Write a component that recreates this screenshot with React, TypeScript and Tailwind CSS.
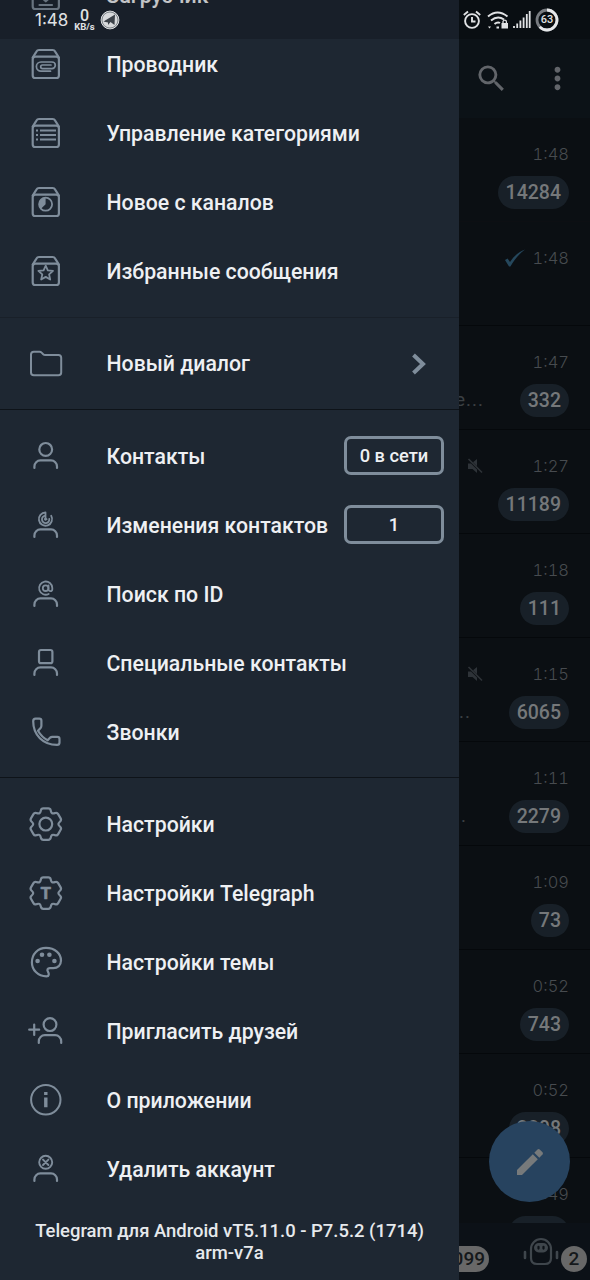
import type { ReactNode } from 'react'
import clsx from 'clsx'
import { MdSearch, MdMoreVert } from 'react-icons/md'

type MenuItem = {
  label: string;
  icon: ReactNode;
  badge?: string;
  arrow?: boolean;
};

type Chat = {
  time: string;
  count?: string;
  text?: string;
  textClass?: string;
  muted?: boolean;
  read?: boolean;
};

// six-tooth gear outline around 0,0 with softened corners
function gearPath() {
  const tooth = [[-5.4, -11.4], [-4.5, -15.7], [4.5, -15.7], [5.4, -11.4]]
  const pts: number[][] = []
  for (let i = 0; i < 6; i++) {
    const a = (i * Math.PI) / 3
    tooth.forEach(([x, y]) => {
      pts.push([x * Math.cos(a) - y * Math.sin(a), x * Math.sin(a) + y * Math.cos(a)])
    })
  }
  let d = ''
  pts.forEach((p, i) => {
    const prev = pts[(i + pts.length - 1) % pts.length]
    const next = pts[(i + 1) % pts.length]
    const near = (q: number[]) => {
      const len = Math.hypot(q[0] - p[0], q[1] - p[1])
      const t = Math.min(2, len / 2) / len
      return `${(p[0] + (q[0] - p[0]) * t).toFixed(2)} ${(p[1] + (q[1] - p[1]) * t).toFixed(2)}`
    }
    d += `${i === 0 ? 'M' : 'L'}${near(prev)}Q${p[0].toFixed(2)} ${p[1].toFixed(2)} ${near(next)}`
  })
  return d + 'Z'
}

const GEAR = gearPath()

function Icon({ children }: { children: ReactNode }) {
  return (
    <svg
      width="36"
      height="35"
      viewBox="0 0 36 35"
      fill="none"
      stroke="currentColor"
      strokeWidth="2.2"
      strokeLinecap="round"
      strokeLinejoin="round"
      className="shrink-0"
    >
      {children}
    </svg>
  )
}

function BoxIcon({ children }: { children: ReactNode }) {
  return (
    <Icon>
      <path d="M4.7 9.5 8.3 3.8Q9.3 2 11 2H24.6Q26.3 2 27.3 3.8L30.9 9.5" />
      <rect x="4.7" y="8.6" width="26.2" height="21.4" rx="2.6" />
      {children}
    </Icon>
  )
}

function PersonIcon({ children }: { children: ReactNode }) {
  return (
    <Icon>
      {children}
      <path d="M6.4 29V27.4A6 6 0 0 1 12.4 21.4H23A6 6 0 0 1 29 27.4V29" />
    </Icon>
  )
}

const mainItems: MenuItem[] = [
  {
    label: 'Загрузчик',
    icon: <BoxIcon><path d="M17.8 13V22M13.8 18.5 17.8 22.3 21.8 18.5M11.5 26H24" /></BoxIcon>,
  },
  {
    label: 'Проводник',
    icon: (
      <BoxIcon>
        <path strokeWidth="1.7" d="M22.5 23.2H13A4.6 4.6 0 0 1 13 14H24A3.3 3.3 0 0 1 24 20.6H14.5A1.8 1.8 0 0 1 14.5 17H23" />
      </BoxIcon>
    ),
  },
  {
    label: 'Управление категориями',
    icon: (
      <BoxIcon>
        <path strokeLinecap="butt" d="M8 13.5H10M12 13.5H28M8 18H10M12 18H28M8 22.5H10M12 22.5H28" />
      </BoxIcon>
    ),
  },
  {
    label: 'Новое с каналов',
    icon: (
      <BoxIcon>
        <circle cx="17.6" cy="18.2" r="6.5" strokeWidth="1.8" />
        <path d="M17.6 18.2V11.7A6.5 6.5 0 0 0 13 22.8Z" fill="currentColor" stroke="none" />
      </BoxIcon>
    ),
  },
  {
    label: 'Избранные сообщения',
    icon: (
      <BoxIcon>
        <path strokeWidth="1.8" d="M17.7 10.6 19.8 15.4 25 15.9 21.1 19.4 22.2 24.5 17.7 21.9 13.2 24.5 14.3 19.4 10.4 15.9 15.6 15.4Z" />
      </BoxIcon>
    ),
  },
]

const dialogItems: MenuItem[] = [
  {
    label: 'Новый диалог',
    arrow: true,
    icon: (
      <Icon>
        <path strokeWidth="2" d="M3 7.6Q3 4.8 5.8 4.8H11.6Q12.8 4.8 13.6 5.6L15.2 7.2Q16 8 17.2 8H30.4Q33.2 8 33.2 10.8V25.4Q33.2 28.2 30.4 28.2H5.8Q3 28.2 3 25.4Z" />
      </Icon>
    ),
  },
]

const contactItems: MenuItem[] = [
  {
    label: 'Контакты',
    badge: '0 в сети',
    icon: <PersonIcon><circle cx="17.7" cy="10.4" r="6.4" /></PersonIcon>,
  },
  {
    label: 'Изменения контактов',
    badge: '1',
    icon: (
      <PersonIcon>
        <path strokeWidth="1.8" d="M17.5 4.5A6.6 6.6 0 1 0 23.2 7.8M17.5 7.7A3.7 3.7 0 1 0 21.3 10.8M17.5 4.5V11.2" />
        <circle cx="17.6" cy="11.2" r="1.2" strokeWidth="1" />
      </PersonIcon>
    ),
  },
  {
    label: 'Поиск по ID',
    icon: (
      <PersonIcon>
        <path strokeWidth="1.8" d="M20.7 17A6.6 6.6 0 1 1 24.3 11V12.2A1.9 1.9 0 0 1 20.5 12.2V8.4" />
        <circle cx="17.6" cy="11.2" r="2.8" strokeWidth="1.8" />
      </PersonIcon>
    ),
  },
  {
    label: 'Специальные контакты',
    icon: <PersonIcon><rect x="11" y="4" width="13.4" height="13.2" rx="2" /></PersonIcon>,
  },
  {
    label: 'Звонки',
    icon: (
      <Icon>
        <path d="M7.5 3.6H11.3Q13.4 3.6 13.4 5.7V10.8Q13.4 12 12.6 12.9L10 15.7Q13.6 22 19.7 25.3L22.2 22.6Q23 21.8 24.2 21.8H29.4Q31.5 21.8 31.5 23.9V27.4Q31.5 29.8 29 29.8C15 29.8 5.2 20 5.2 6.2Q5.2 3.6 7.5 3.6Z" />
      </Icon>
    ),
  },
]

const settingsItems: MenuItem[] = [
  {
    label: 'Настройки',
    icon: (
      <Icon>
        <g transform="translate(17.8 17.1)">
          <path d={GEAR} />
          <circle r="6.4" />
        </g>
      </Icon>
    ),
  },
  {
    label: 'Настройки Telegraph',
    icon: (
      <Icon>
        <g transform="translate(17.8 17.1)">
          <path d={GEAR} />
          <text
            y="6.2"
            textAnchor="middle"
            fill="currentColor"
            stroke="currentColor"
            strokeWidth="0.6"
            className="font-['Roboto',sans-serif] text-[17px] font-bold"
          >
            T
          </text>
        </g>
      </Icon>
    ),
  },
  {
    label: 'Настройки темы',
    icon: (
      <Icon>
        <path d="M18 2.9C27 2.9 33 8.5 33 15.6 33 20.4 29.6 23.1 25.3 23.1H21.8C19.4 23.1 18.9 25 19.9 26.6 21.2 28.6 21.3 31.3 18.5 31.3 9.6 31.3 3.9 24.6 3.9 17.4 3.9 9 10 2.9 18 2.9Z" />
        <g fill="currentColor" stroke="none">
          <circle cx="9.6" cy="16" r="2.3" />
          <circle cx="14" cy="9.7" r="2.3" />
          <circle cx="21.4" cy="9.7" r="2.3" />
          <circle cx="26.4" cy="16" r="2.3" />
        </g>
      </Icon>
    ),
  },
  {
    label: 'Пригласить друзей',
    icon: (
      <Icon>
        <circle cx="22" cy="10.6" r="6.4" />
        <path d="M10.8 29V27.2A6 6 0 0 1 16.8 21.2H27.2A6 6 0 0 1 33.2 27.2V29M1.2 15.7H11.2M6.2 10.5V20.9" />
      </Icon>
    ),
  },
  {
    label: 'О приложении',
    icon: (
      <Icon>
        <circle cx="17.8" cy="16.8" r="14.7" strokeWidth="2" />
        <path strokeWidth="3.4" strokeLinecap="butt" d="M17.8 9V12M17.8 14.4V24.2" />
      </Icon>
    ),
  },
  {
    label: 'Удалить аккаунт',
    icon: (
      <PersonIcon>
        <circle cx="17.7" cy="10.3" r="6.5" strokeWidth="1.9" />
        <path strokeWidth="1.9" d="M15 7.6 20.4 13M20.4 7.6 15 13" />
      </PersonIcon>
    ),
  },
]

const chats: Chat[] = [
  { time: '1:48', count: '14284' },
  { time: '1:48', read: true },
  { time: '1:47', count: '332', text: 'е...', textClass: '-ml-1' },
  { time: '1:27', count: '11189', muted: true },
  { time: '1:18', count: '111' },
  { time: '1:15', count: '6065', muted: true, text: '..' },
  { time: '1:11', count: '2279', text: '.', textClass: 'ml-0.5' },
  { time: '1:09', count: '73' },
  { time: '0:52', count: '743' },
  { time: '0:52', count: '2808' },
  { time: '0:49', count: '1208' },
]

function Section({ items, className = 'pt-px' }: { items: MenuItem[]; className?: string }) {
  return (
    <ul>
      {items.map((item) => (
        <li key={item.label} className="flex h-[69px] items-center pr-[15px] pl-7 text-[#7f8d9b]">
          {item.icon}
          <span className={clsx('ml-[42.5px] flex-1 whitespace-nowrap text-[21.25px] font-medium text-[#eef0f3]', className)}>
            {item.label}
          </span>
          {item.badge && (
            <span className="mb-0.5 flex h-[39px] w-[100px] items-center justify-center rounded-[7px] border-3 border-[#7f8d9b] pt-px text-[18.3px] font-medium text-[#eef0f3]">
              {item.badge}
            </span>
          )}
          {item.arrow && (
            <svg width="16" height="22" viewBox="0 0 16 22" className="mr-[17px] mb-0.5" fill="none" stroke="currentColor" strokeWidth="4">
              <path d="M2.5 2 12 11 2.5 20" />
            </svg>
          )}
        </li>
      ))}
    </ul>
  )
}

function Drawer() {
  return (
    <aside className="flex h-full w-[459px] shrink-0 flex-col bg-[#1e2732]">
      <div className="-mt-[38px]">
        <Section items={mainItems} className="pb-px" />
      </div>
      <hr className="mt-2.5 mb-3 border-[#192029]" />
      <Section items={dialogItems} className="pb-px" />
      <hr className="mt-2.5 mb-3 border-[#0e1319]" />
      <Section items={contactItems} />
      <hr className="mt-2.5 mb-3 border-[#0e1319]" />
      <Section items={settingsItems} />
      <p className="mt-4 text-center text-[18.45px] leading-[22px] font-medium text-[#e6e9ec]">
        Telegram для Android vT5.11.0 - P7.5.2 (1714)
        <br />
        arm-v7a
      </p>
    </aside>
  )
}

function ChatRow({ chat }: { chat: Chat }) {
  return (
    <div className="h-[104px] shrink-0 border-b border-[#05080b] pt-[25px] pr-[21px] first:border-[#0d0f13]">
      <div className="flex h-[22px] items-center justify-end">
        {chat.muted && (
          <svg width="16" height="16" viewBox="0 0 16 16" className="mr-auto ml-2" fill="#2e3338">
            <path d="M1 5.5H4L10 11.5V15L5.5 11H1ZM6 4.2 10 1V8.2Z" />
            <path d="M1.5 1 15 14.5" stroke="#2e3338" strokeWidth="1.6" />
          </svg>
        )}
        {chat.read && (
          <svg width="22" height="19" viewBox="0 0 22 19" className="mr-[7px]" fill="#25475c">
            <path d="M1 11 3.6 9.4 6 13C10 7 14.5 3 21 .5 15 5 10.5 10.5 6.4 17.6H5Z" />
          </svg>
        )}
        <span className="font-['Inter',sans-serif] text-[16.5px] font-light tabular-nums text-[#474b4f]">{chat.time}</span>
      </div>
      <div className="mt-[11px] flex h-[33px] items-center justify-end">
        {chat.text && (
          <span className={clsx('mr-auto text-[19px] tracking-[1px] text-[#3b4044]', chat.textClass)}>{chat.text}</span>
        )}
        {chat.count && (
          <span className="flex h-[33px] items-center rounded-full bg-[#182028] px-2 text-[19.5px] font-medium text-[#75787a]">
            {chat.count}
          </span>
        )}
      </div>
    </div>
  )
}

function BottomBar() {
  return (
    <nav className="flex h-[57px] shrink-0 items-center bg-[#0c1117] pt-[15px]">
      <span className="flex h-[26px] w-[30px] items-center justify-end rounded-r-full bg-[#686868] pr-1 text-[19px] font-medium text-[#15181b]">
        099
      </span>
      <svg width="36" height="30" viewBox="0 0 36 30" className="mb-4 ml-[34px]" fill="none" stroke="#3f464c" strokeWidth="2.2" strokeLinecap="round">
        <path d="M8 22V13A10 10 0 0 1 28 13V22Q28 28 22 28H14Q8 28 8 22Z" />
        <rect x="11" y="7" width="14" height="9.5" rx="4.7" fill="#3f464c" stroke="none" />
        <path d="M2 16V22M34 16V22" strokeWidth="2.6" />
        <path d="M15.5 10.8V12.6M20.5 10.8V12.6" stroke="#0c1117" />
      </svg>
      <span className="ml-0.5 flex h-[26px] w-[26px] items-center justify-center rounded-full bg-[#686868] text-[19px] font-medium text-[#15181b]">
        2
      </span>
    </nav>
  )
}

function ChatList() {
  return (
    <main className="relative flex h-full min-w-0 flex-1 flex-col overflow-hidden bg-[#0b0f13]">
      <header className="flex h-[118px] shrink-0 items-center bg-[#0c1217] pt-[39px] text-[#62656a]">
        <MdSearch className="ml-[14.5px] h-[35px] w-[35px]" />
        <MdMoreVert className="ml-[31.5px] h-[35px] w-[35px]" />
      </header>
      <div className="flex min-h-0 flex-1 flex-col overflow-hidden">
        {chats.map((chat, i) => (
          <ChatRow key={i} chat={chat} />
        ))}
      </div>
      <BottomBar />

      {/* compose button */}
      <button className="absolute right-5 bottom-[78px] flex h-[81px] w-[81px] items-center justify-center rounded-full bg-[#27435f]">
        <svg width="28" height="28" viewBox="0 0 28 28" fill="#777a7b">
          <path d="M1 27V22L16.8 6.2 21.8 11.2 6 27Z" />
          <path d="M18.300 4.700 21.500 1.500Q22.600.5 23.700 1.500L26.500 4.300Q27.500 5.400 26.500 6.500L23.300 9.700Z" />
        </svg>
      </button>
    </main>
  )
}

function StatusBar() {
  return (
    <div className="absolute inset-x-0 top-0 flex h-[39px] items-center bg-black/18 text-[#e0e2e4]">
      <span className="mt-0.5 ml-[35px] w-[39px] font-['Inter',sans-serif] text-[17px]">1:48</span>
      <div className="mt-0.5 flex w-[21px] flex-col items-center">
        <span className="text-[16px] leading-[13px] font-medium">0</span>
        <span className="text-[9.5px] leading-[10px] font-bold">KB/s</span>
      </div>
      <svg width="20" height="20" viewBox="0 0 20 20" className="ml-[5px]">
        <circle cx="10" cy="10" r="8.9" fill="#d8dadc" stroke="#e0e2e4" strokeWidth="1" />
        <circle cx="10" cy="10" r="8" fill="none" stroke="#747a80" strokeWidth="0.9" />
        <path d="M3.5 11.5 15 4.5 14.5 15 10.5 12 8 15V12.5Z" fill="#3c4249" />
      </svg>

      <div className="ml-auto flex items-center pr-[31px]">
        <svg width="18" height="20" viewBox="0 0 18 20" fill="none" stroke="currentColor" strokeWidth="1.9">
          <circle cx="9" cy="11" r="6.9" />
          <path d="M9 7V11.5H12.5M.8 5 5 1.6M17.2 5 13 1.6" />
        </svg>
        <svg width="22" height="20" viewBox="0 0 22 20" className="ml-1.5" fill="none" stroke="currentColor" strokeWidth="2">
          <path d="M1 6.5Q10.5-1.5 20.5 6.5M4 10.5Q10.5 5 17 9.5M7.5 14Q10.5 11.5 13 13" />
          <path d="M1 16.5H4L2.5 18.5ZM9.5 16.5H12V18.5H9.5Z" fill="currentColor" stroke="none" />
          <rect x="14.5" y="13" width="6.5" height="5.5" fill="currentColor" stroke="none" />
          <path d="M16 13V11.8A1.7 1.7 0 0 1 19.4 11.8V13" strokeWidth="1.3" />
        </svg>
        <svg width="19" height="19" viewBox="0 0 19 19" className="ml-[3px]" stroke="currentColor" strokeWidth="1.8">
          <path d="M2 18V16M5.2 18V13.5M8.4 18V10.5M11.6 18V7.5M14.8 18V4M17.7 18V1" />
        </svg>
        <div className="relative ml-1 flex h-6 w-6 items-center justify-center">
          <svg width="24" height="24" viewBox="0 0 24 24" className="absolute inset-0 -rotate-90" fill="none" strokeWidth="2.8">
            <circle cx="12" cy="12" r="10" stroke="#777b80" />
            <circle cx="12" cy="12" r="10" stroke="#e6e8ea" pathLength="100" strokeDasharray="63 37" />
          </svg>
          <span className="pt-px text-[11px] leading-[12px] font-medium">63</span>
        </div>
      </div>
    </div>
  )
}

export default function App() {
  return (
    <div className="relative flex h-[1280px] w-[590px] overflow-hidden bg-[#0b0f13] font-['Roboto',sans-serif]">
      <Drawer />
      <ChatList />
      <StatusBar />
    </div>
  )
}
